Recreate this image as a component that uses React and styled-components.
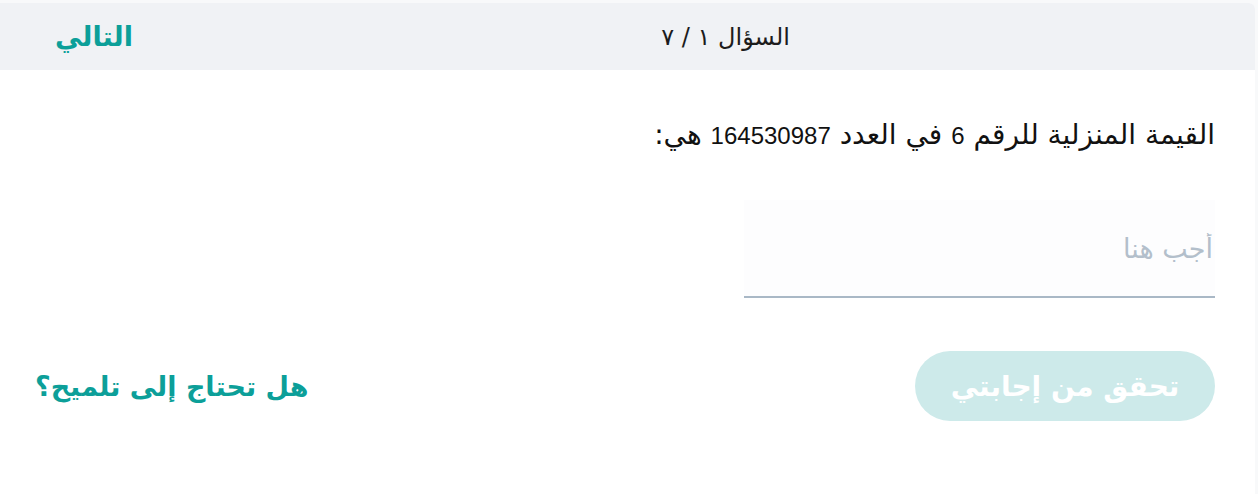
import React from 'react'
import styled, { createGlobalStyle } from 'styled-components'

const GlobalStyle = createGlobalStyle`
  html, body {
    margin: 0;
    padding: 0;
    background: #f8f9fa;
  }
  body {
    font-family: "DejaVu Sans", sans-serif;
  }
`;

const Card = styled.div`
  direction: rtl;
  width: 1255px;
  min-height: 491px;
  margin-top: 3px;
  background: #fff;
  border-radius: 0 6px 0 0;
  overflow: hidden;
`;

const Header = styled.header`
  display: flex;
  align-items: center;
  height: 67px;
  background: #f0f2f5;
  padding: 0 55px 0 55px;
`;

const Title = styled.div`
  margin-right: 410px;
  font-size: 24px;
  color: #1c1c1c;
`;

const NextLink = styled.a`
  margin-right: auto;
  font-size: 27px;
  font-weight: bold;
  color: #0c9f99;
  text-decoration: none;
  cursor: pointer;
`;

const Body = styled.div`
  display: flex;
  flex-direction: column;
  padding: 47px 40px 0 35px;
`;

const Question = styled.p`
  margin: 0;
  height: 36px;
  font-size: 28px;
  line-height: 36px;
  color: #111;
`;

const Num = styled.span`
  font-family: "Liberation Sans", sans-serif;
  font-size: 24px;
  line-height: 1;
`;

const AnswerInput = styled.input`
  direction: rtl;
  box-sizing: border-box;
  width: 471px;
  height: 98px;
  margin-top: 47px;
  padding: 0 2px;
  border: none;
  border-bottom: 2px solid #a9b8c6;
  background: #fdfdfe;
  font-family: inherit;
  font-size: 27px;
  color: #222;
  outline: none;

  &::placeholder {
    color: #b3bfcb;
  }
`;

const Actions = styled.div`
  display: flex;
  align-items: center;
  justify-content: space-between;
  margin-top: 53px;
`;

const CheckButton = styled.button`
  width: 300px;
  height: 70px;
  border: none;
  border-radius: 35px;
  background: #cdeaea;
  color: #fff;
  font-family: inherit;
  font-size: 28px;
  font-weight: bold;
  cursor: default;
`;

const HintLink = styled.a`
  font-size: 27px;
  font-weight: bold;
  color: #0c9f99;
  cursor: pointer;
`;

export default function App() {
  return (
    <>
      <GlobalStyle />
      <Card>
        <Header>
          <Title>السؤال ١ / ٧</Title>
          <NextLink>التالي</NextLink>
        </Header>
        <Body>
          <Question>
            القيمة المنزلية للرقم <Num>6</Num> في العدد <Num>164530987</Num> هي:
          </Question>
          <AnswerInput placeholder="أجب هنا" />
          <Actions>
            <CheckButton disabled>تحقق من إجابتي</CheckButton>
            <HintLink>هل تحتاج إلى تلميح؟</HintLink>
          </Actions>
        </Body>
      </Card>
    </>
  )
}
